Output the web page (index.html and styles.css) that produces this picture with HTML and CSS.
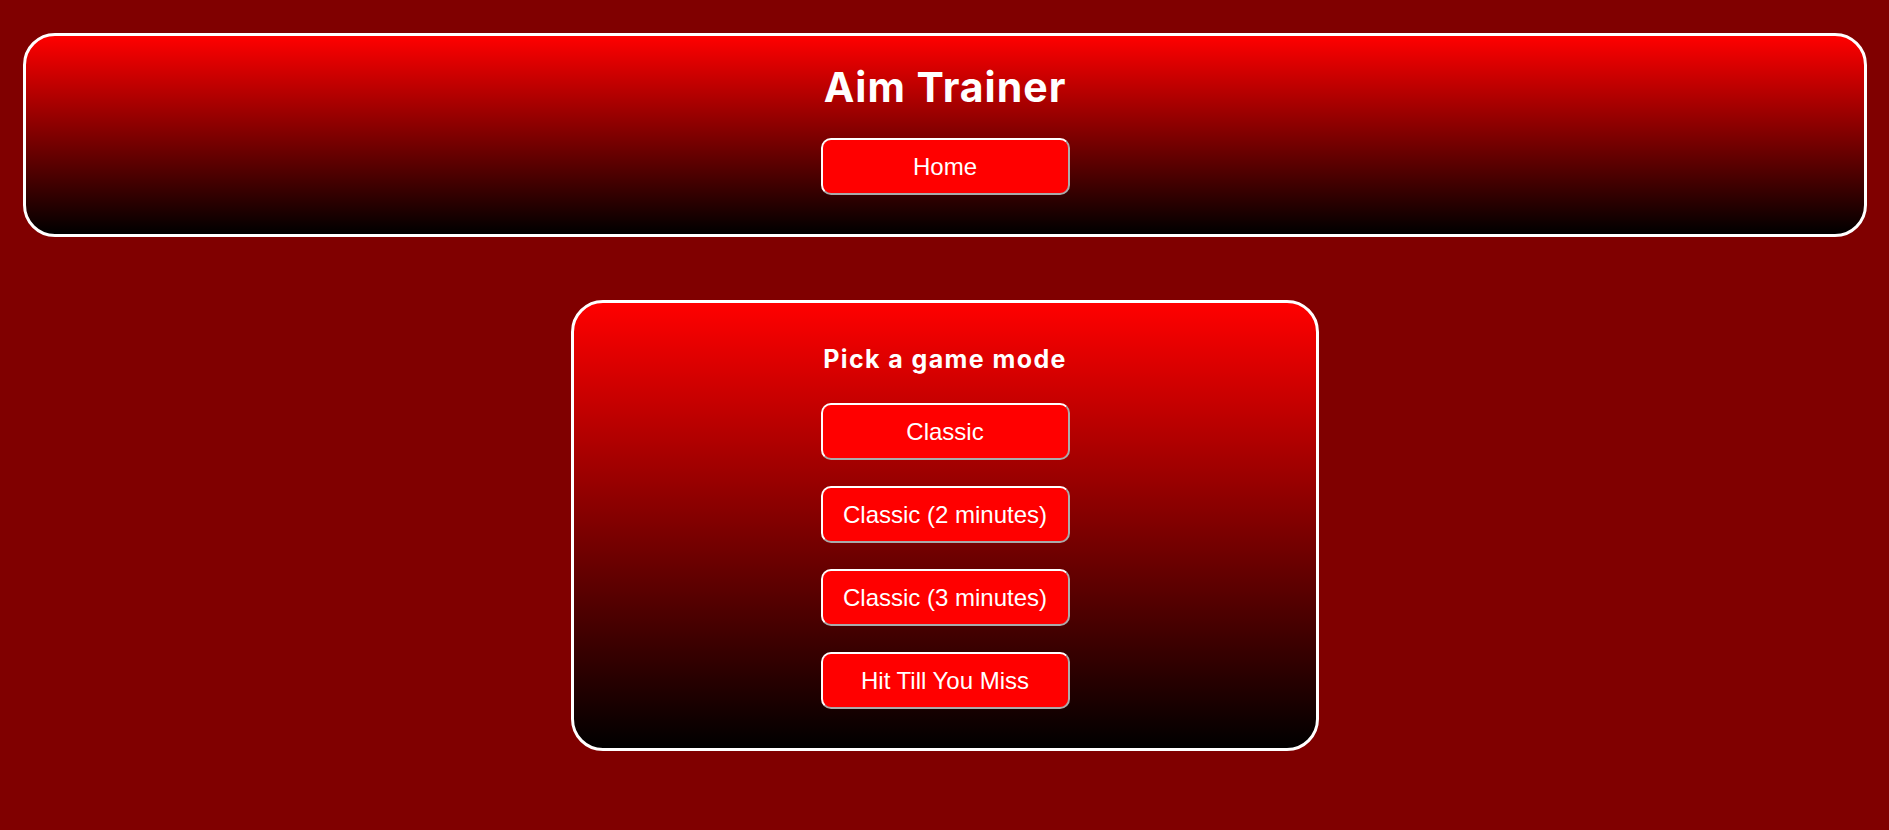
FILE: index.html
```html
<!DOCTYPE html>
<html lang="en">
<head>
<meta charset="utf-8">
<title>Aim Trainer</title>
<link rel="stylesheet" href="styles.css">
</head>
<body>
  <header class="header">
    <h1 class="title">Aim Trainer</h1>
    <button class="btn">Home</button>
  </header>
  <main class="menu">
    <h2 class="menu-title">Pick a game mode</h2>
    <div class="modes">
      <button class="btn">Classic</button>
      <button class="btn">Classic (2 minutes)</button>
      <button class="btn">Classic (3 minutes)</button>
      <button class="btn">Hit Till You Miss</button>
    </div>
  </main>
</body>
</html>
```
FILE: styles.css
```css
html, body {
  margin: 0;
  height: 100%;
}
body {
  background: #800000;
  padding: 33px 22px 0 23px;
  box-sizing: border-box;
  font-family: "Liberation Sans", Arial, sans-serif;
  color: #fff;
}
.header {
  border: 3px solid #fff;
  border-radius: 32px;
  background: linear-gradient(#ff0000, #000000);
  display: flex;
  flex-direction: column;
  align-items: center;
  padding: 26px 0 39px;
}
.title {
  margin: 0 0 26px;
  font-family: Inter, "Open Sans", sans-serif;
  font-weight: 700;
  font-size: 41px;
  line-height: 50px;
  letter-spacing: 1px;
  color: #fff;
}
.btn {
  width: 249px;
  box-sizing: border-box;
  padding: 13px 0;
  border: 2px solid;
  border-color: #fff #aaa #aaa #fff;
  border-radius: 10px;
  background: #ff0000;
  color: #fff;
  font-family: "Liberation Sans", Arial, sans-serif;
  font-size: 24px;
  line-height: 27px;
  cursor: pointer;
}
.menu {
  width: 748px;
  box-sizing: border-box;
  margin: 63px auto 0;
  border: 3px solid #fff;
  border-radius: 32px;
  background: linear-gradient(#ff0000, #000000);
  display: flex;
  flex-direction: column;
  align-items: center;
  padding: 41px 0 39px;
}
.menu-title {
  margin: 0 0 29px;
  font-family: Inter, "Open Sans", sans-serif;
  font-weight: 700;
  font-size: 25px;
  line-height: 30px;
  letter-spacing: 1.4px;
  color: #fff;
}
.modes {
  display: flex;
  flex-direction: column;
  align-items: center;
  gap: 26px;
}
```
